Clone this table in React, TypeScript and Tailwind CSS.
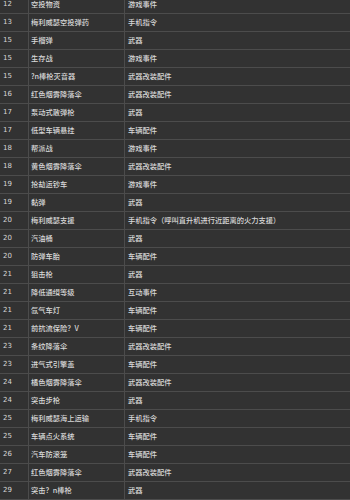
import React from "react";

const rows: [string, string, string][] = [
  ["12", "空投物资", "游戏事件"],
  ["13", "梅利威瑟空投弹药", "手机指令"],
  ["15", "手榴弹", "武器"],
  ["15", "生存战", "游戏事件"],
  ["15", "?n棒枪灭音器", "武器改装配件"],
  ["16", "红色烟雾降落伞", "武器改装配件"],
  ["17", "泵动式散弹枪", "武器"],
  ["17", "低型车辆悬挂", "车辆配件"],
  ["18", "帮派战", "游戏事件"],
  ["18", "黄色烟雾降落伞", "武器改装配件"],
  ["19", "抢劫运钞车", "游戏事件"],
  ["19", "黏弹", "武器"],
  ["20", "梅利威瑟支援", "手机指令（呼叫直升机进行近距离的火力支援）"],
  ["20", "汽油桶", "武器"],
  ["20", "防弹车胎", "车辆配件"],
  ["21", "狙击枪", "武器"],
  ["21", "降低通缉等级", "互动事件"],
  ["21", "氙气车灯", "车辆配件"],
  ["21", "前抗流保险？V", "车辆配件"],
  ["23", "条纹降落伞", "武器改装配件"],
  ["23", "进气式引擎盖", "车辆配件"],
  ["24", "橘色烟雾降落伞", "武器改装配件"],
  ["24", "突击步枪", "武器"],
  ["25", "梅利威瑟海上运输", "手机指令"],
  ["25", "车辆点火系统", "车辆配件"],
  ["26", "汽车防滚笼", "车辆配件"],
  ["27", "红色烟雾降落伞", "武器改装配件"],
  ["29", "突击？n棒枪", "武器"],
];

export default function App() {
  return (
    <div className="h-[500px] w-[350px] overflow-hidden bg-[#323232]">
      <div className="mt-[-4px] flex flex-col">
        {rows.map((r, i) => (
          <div
            key={i}
            className="grid h-[18px] grid-cols-[29px_96px_1fr] border-b border-[#4c4c4c] text-[#d8d8d8]"
          >
            <div
              className="flex items-center border-r border-[#4c4c4c] pl-[3px] text-[7px] leading-none"
              style={{ fontFamily: '"DejaVu Sans", sans-serif' }}
            >
              {r[0]}
            </div>
            <div
              className="flex items-center whitespace-nowrap border-r border-[#4c4c4c] pl-[2px] text-[7.25px] font-medium leading-none"
              style={{ fontFamily: '"Noto Sans CJK SC", sans-serif' }}
            >
              {r[1]}
            </div>
            <div
              className="flex items-center whitespace-nowrap pl-[3px] text-[7.25px] font-medium leading-none"
              style={{ fontFamily: '"Noto Sans CJK SC", sans-serif' }}
            >
              {r[2]}
            </div>
          </div>
        ))}
      </div>
    </div>
  );
}
